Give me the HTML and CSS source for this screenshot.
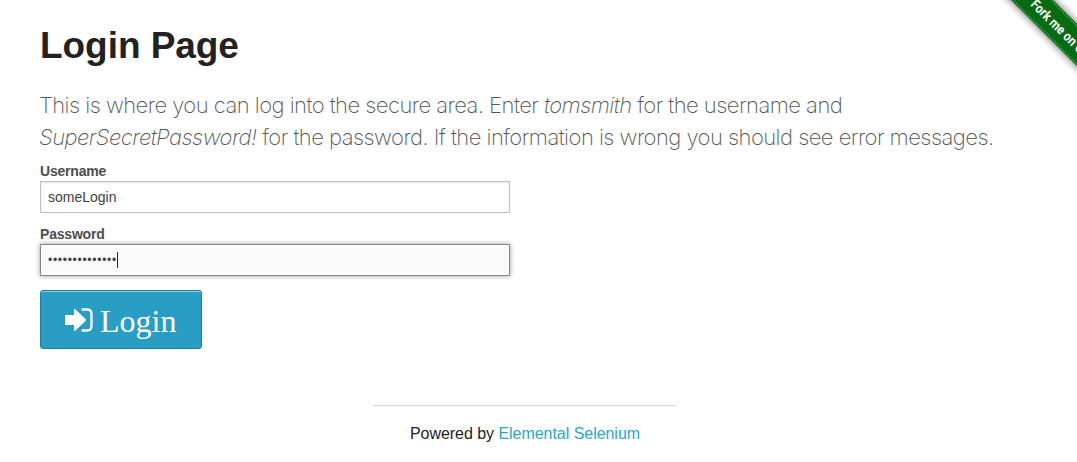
FILE: index.html
```html
<!DOCTYPE html>
<html lang="en">
<head>
<meta charset="utf-8">
<title>Login Page</title>
<link rel="stylesheet" href="styles.css">
</head>
<body>
<a class="ribbon" aria-label="Fork me on GitHub">
<svg width="90" height="90" viewBox="0 0 90 90">
<g transform="translate(45 0) rotate(45)">
<rect class="band" x="-60" y="-15" width="200" height="30"/>
<path class="stitch" d="M-60 -13.500H140M-60 13.500H140"/>
<text class="fork" transform="translate(2 5) scale(.87 1)">Fork me on GitHub</text>
</g>
</svg>
</a>
<main class="content">
<h1 class="title">Login Page</h1>
<h2 class="intro"><span class="line line-a">This is where you can log into the secure area. Enter <em>tomsmith</em> for the username and</span><span class="line line-b"><em>SuperSecretPassword!</em> for the password. If the information is wrong you should see error messages.</span></h2>
<form class="login">
<label class="label" for="username">Username</label>
<input class="field" id="username" type="text" value="someLogin">
<label class="label" for="password">Password</label>
<div class="field focused" id="password"><span class="dots">••••••••••••••</span><span class="caret"></span></div>
<button class="submit" type="button">
<svg class="icon" width="28" height="24" viewBox="0 0 28 24"><path fill="#fff" d="M1 7h8V2.200Q9 .4 10.400 1.500L20.500 11q1 1 0 2l-10.100 9.500Q9 23.600 9 21.800V17H1q-1 0-1-1V8q0-1 1-1z"/><path fill="none" stroke="#fff" stroke-width="2.300" stroke-linecap="round" d="M17.500 1.500H22q4.500 0 4.500 4.500v12q0 4.500-4.500 4.500h-4.500"/></svg>
<span class="submit-text">Login</span>
</button>
</form>
</main>
<footer class="footer"><hr class="rule"><div class="powered">Powered by <a class="link">Elemental Selenium</a></div></footer>
</body>
</html>
```
FILE: styles.css
```css
* { box-sizing: border-box; }
body { margin: 0; height: 462px; overflow: hidden; background: #fff; color: #222; font-family: "Liberation Sans", Arial, sans-serif; position: relative; }
.ribbon { position: absolute; top: 0; right: 0; width: 90px; height: 90px; overflow: hidden; }
.ribbon svg { display: block; }
.band { fill: #076b14; filter: drop-shadow(0 0 4px rgba(0,0,0,.6)); }
.stitch { stroke: #62ab6b; stroke-width: 1; stroke-dasharray: 2 1; }
.fork { fill: #fff; font: bold 13.5px Roboto, sans-serif; }
.content { padding: 20px 40px 0; }
.title { margin: 0 0 17px; font-size: 37px; line-height: 52px; font-weight: bold; letter-spacing: -.05px; }
.intro { margin: 0 0 0 -1px; font-family: Inter, sans-serif; font-size: 22px; line-height: 32px; font-weight: 200; color: #555; }
.line { display: block; width: max-content; white-space: nowrap; letter-spacing: -.53px; }
.login { width: 470px; display: flex; flex-direction: column; align-items: stretch; padding-top: 8px; }
.label { font-size: 14px; line-height: 20px; height: 20px; font-weight: bold; letter-spacing: -.2px; color: #4d4d4d; }
.field { height: 32px; padding: 0 7px; margin: 0 0 11px; border: 1px solid #bfbfbf; box-shadow: inset 0 1px 2px rgba(0,0,0,.1); background: #fff; color: #404040; font: 14px "Liberation Sans", Arial, sans-serif; }
.focused { display: flex; align-items: center; margin-bottom: 14px; background: #fafafa; border-color: #888; box-shadow: 0 0 5px #999; }
.dots { font-size: 12px; letter-spacing: .72px; }
.caret { width: 1px; height: 16px; background: #222; }
.submit { width: 162px; height: 59px; display: flex; align-items: center; gap: 7px; padding: 0 0 0 24px; border: 1px solid #1f7f9b; border-radius: 3px; background: #2a9dc4; box-shadow: inset 0 1px 0 rgba(255,255,255,.5); color: #fff; }
.submit-text { font: 32px/40px "Liberation Serif", "Times New Roman", serif; padding-top: 2px; }
.footer { width: 304px; margin: 56px 0 0 373px; }
.rule { height: 1px; border: 0; margin: 0; background: #d6d6d6; }
.powered { padding-top: 16px; text-align: center; font-size: 16px; line-height: 24px; letter-spacing: -.04px; }
.link { color: #2ba6cb; }
```
